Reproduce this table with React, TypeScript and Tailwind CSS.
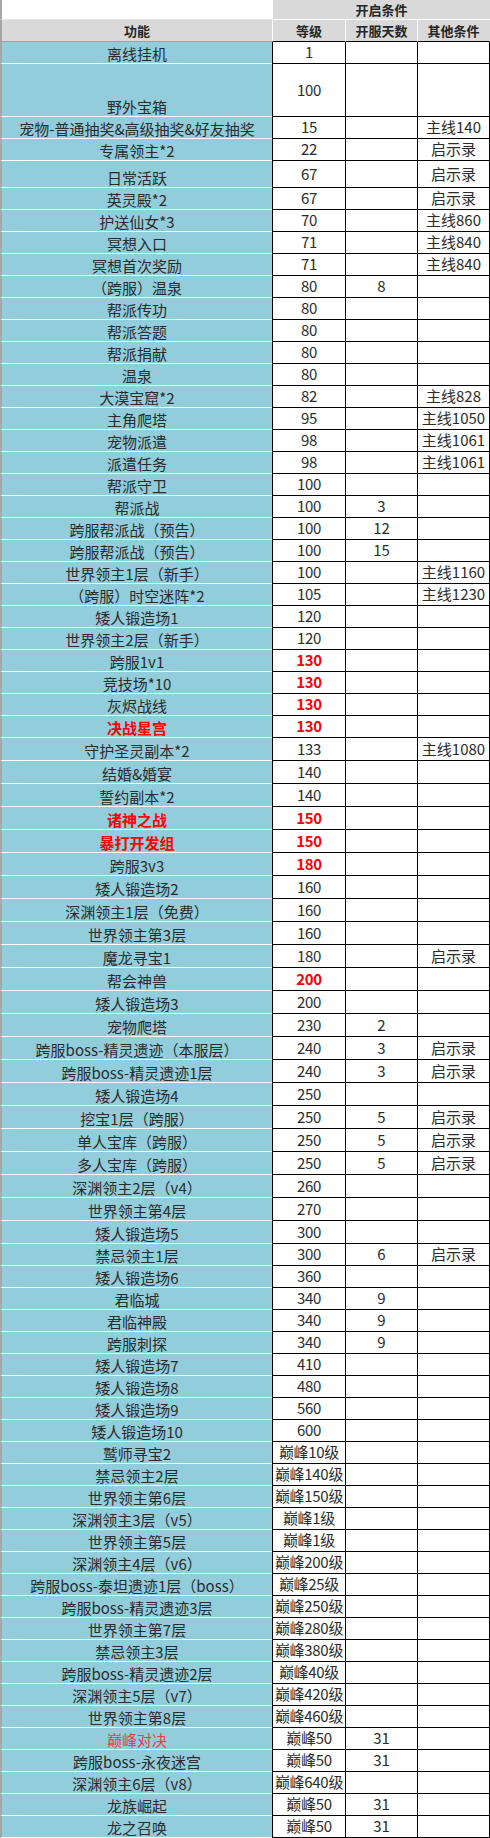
import React from 'react';

// Feature unlock table: name column on the left, unlock conditions on the right.
type Row = {
  n: string;
  l: string;
  d?: string;
  o?: string;
  h?: 22 | 23 | 27 | 53;
  nameRed?: boolean;
  nameSoftRed?: boolean;
  nameBold?: boolean;
  lvRed?: boolean;
};

const heightClass: Record<number, string> = {
  22: 'h-[22px]',
  23: 'h-[23px]',
  27: 'h-[27px]',
  53: 'h-[53px]',
};

const top: Row[] = [
  { n: '离线挂机', l: '1' },
  { n: '野外宝箱', l: '100', h: 53 },
  { n: '宠物-普通抽奖&高级抽奖&好友抽奖', l: '15', o: '主线140' },
  { n: '专属领主*2', l: '22', o: '启示录' },
  { n: '日常活跃', l: '67', o: '启示录', h: 27 },
  { n: '英灵殿*2', l: '67', o: '启示录' },
  { n: '护送仙女*3', l: '70', o: '主线860' },
  { n: '冥想入口', l: '71', o: '主线840' },
  { n: '冥想首次奖励', l: '71', o: '主线840' },
  { n: '（跨服）温泉', l: '80', d: '8' },
  { n: '帮派传功', l: '80' },
  { n: '帮派答题', l: '80' },
  { n: '帮派捐献', l: '80' },
  { n: '温泉', l: '80' },
  { n: '大漠宝窟*2', l: '82', o: '主线828' },
  { n: '主角爬塔', l: '95', o: '主线1050' },
  { n: '宠物派遣', l: '98', o: '主线1061' },
  { n: '派遣任务', l: '98', o: '主线1061' },
  { n: '帮派守卫', l: '100' },
  { n: '帮派战', l: '100', d: '3' },
  { n: '跨服帮派战（预告）', l: '100', d: '12' },
  { n: '跨服帮派战（预告）', l: '100', d: '15' },
  { n: '世界领主1层（新手）', l: '100', o: '主线1160' },
  { n: '（跨服）时空迷阵*2', l: '105', o: '主线1230' },
  { n: '矮人锻造场1', l: '120' },
  { n: '世界领主2层（新手）', l: '120' },
  { n: '跨服1v1', l: '130', lvRed: true },
  { n: '竞技场*10', l: '130', lvRed: true },
  { n: '灰烬战线', l: '130', lvRed: true },
  { n: '决战星宫', l: '130', lvRed: true, nameRed: true, nameBold: true },
];

const middle: Row[] = [
  { n: '守护圣灵副本*2', l: '133', o: '主线1080' },
  { n: '结婚&婚宴', l: '140' },
  { n: '誓约副本*2', l: '140' },
  { n: '诸神之战', l: '150', lvRed: true, nameRed: true, nameBold: true },
  { n: '暴打开发组', l: '150', lvRed: true, nameRed: true, nameBold: true },
  { n: '跨服3v3', l: '180', lvRed: true },
  { n: '矮人锻造场2', l: '160' },
  { n: '深渊领主1层（免费）', l: '160' },
  { n: '世界领主第3层', l: '160' },
  { n: '魔龙寻宝1', l: '180', o: '启示录' },
  { n: '帮会神兽', l: '200', lvRed: true },
  { n: '矮人锻造场3', l: '200' },
  { n: '宠物爬塔', l: '230', d: '2' },
  { n: '跨服boss-精灵遗迹（本服层）', l: '240', d: '3', o: '启示录' },
  { n: '跨服boss-精灵遗迹1层', l: '240', d: '3', o: '启示录' },
  { n: '矮人锻造场4', l: '250' },
  { n: '挖宝1层（跨服）', l: '250', d: '5', o: '启示录' },
  { n: '单人宝库（跨服）', l: '250', d: '5', o: '启示录' },
  { n: '多人宝库（跨服）', l: '250', d: '5', o: '启示录' },
  { n: '深渊领主2层（v4）', l: '260' },
  { n: '世界领主第4层', l: '270' },
  { n: '矮人锻造场5', l: '300' },
].map((r) => ({ ...r, h: 23 as const }));

const bottom: Row[] = [
  { n: '禁忌领主1层', l: '300', d: '6', o: '启示录' },
  { n: '矮人锻造场6', l: '360' },
  { n: '君临城', l: '340', d: '9' },
  { n: '君临神殿', l: '340', d: '9' },
  { n: '跨服刺探', l: '340', d: '9' },
  { n: '矮人锻造场7', l: '410' },
  { n: '矮人锻造场8', l: '480' },
  { n: '矮人锻造场9', l: '560' },
  { n: '矮人锻造场10', l: '600' },
  { n: '鹫师寻宝2', l: '巅峰10级' },
  { n: '禁忌领主2层', l: '巅峰140级' },
  { n: '世界领主第6层', l: '巅峰150级' },
  { n: '深渊领主3层（v5）', l: '巅峰1级' },
  { n: '世界领主第5层', l: '巅峰1级' },
  { n: '深渊领主4层（v6）', l: '巅峰200级' },
  { n: '跨服boss-泰坦遗迹1层（boss）', l: '巅峰25级' },
  { n: '跨服boss-精灵遗迹3层', l: '巅峰250级' },
  { n: '世界领主第7层', l: '巅峰280级' },
  { n: '禁忌领主3层', l: '巅峰380级' },
  { n: '跨服boss-精灵遗迹2层', l: '巅峰40级' },
  { n: '深渊领主5层（v7）', l: '巅峰420级' },
  { n: '世界领主第8层', l: '巅峰460级' },
  { n: '巅峰对决', l: '巅峰50', d: '31', nameSoftRed: true },
  { n: '跨服boss-永夜迷宫', l: '巅峰50', d: '31' },
  { n: '深渊领主6层（v8）', l: '巅峰640级' },
  { n: '龙族崛起', l: '巅峰50', d: '31' },
  { n: '龙之召唤', l: '巅峰50', d: '31' },
];

const rows = [...top, ...middle, ...bottom];

function TableRow({ r }: { r: Row }) {
  const h = heightClass[r.h ?? 22];
  const cell = 'flex items-center justify-center border-b border-l border-black whitespace-nowrap';
  const nameColor = r.nameRed ? 'text-[#ff0000]' : r.nameSoftRed ? 'text-[#f5383d]' : 'text-[#2b2b2b]';
  return (
    <div className={`flex ${h}`}>
      <div
        className={`flex w-[272px] items-end justify-center border-b border-l-2 border-b-white border-l-[#a6a6a6] bg-[#92cddc] leading-[19px] whitespace-nowrap ${nameColor} ${
          r.nameBold ? 'font-bold' : 'font-normal'
        }`}
      >
        {r.n}
      </div>
      <div
        className={`${cell} w-[73px] tracking-[-0.3px] ${r.lvRed ? 'font-bold text-[#ff0000]' : 'text-[#2b2b2b]'}`}
      >
        {r.l}
      </div>
      <div className={`${cell} w-[72px] text-[#2b2b2b]`}>{r.d}</div>
      <div className={`${cell} w-[73px] border-r text-[#2b2b2b]`}>{r.o}</div>
    </div>
  );
}

export default function App() {
  return (
    <div className="w-[490px] bg-white font-['Noto_Sans_CJK_SC','Microsoft_YaHei',sans-serif] text-[15px]">
      {/* header: group title */}
      <div className="flex h-[20px] text-[13px] font-bold text-[#262626]">
        <div className="w-[272px] border-b border-l-2 border-b-[#e6e6e6] border-l-[#a6a6a6] bg-white" />
        <div className="flex w-[218px] items-center justify-center border-b border-l border-white bg-[#d9d9d9]">
          开启条件
        </div>
      </div>
      {/* header: column titles */}
      <div className="flex h-[22px] text-[13px] font-bold text-[#262626]">
        <div className="flex w-[272px] items-center justify-center border-b border-l-2 border-b-[#a0a0a0] border-l-[#a6a6a6] bg-[#d9d9d9]">
          功能
        </div>
        <div className="flex w-[73px] items-center justify-center border-b border-l border-b-black border-l-white bg-[#d9d9d9]">
          等级
        </div>
        <div className="flex w-[72px] items-center justify-center border-b border-l border-b-black border-l-white bg-[#d9d9d9]">
          开服天数
        </div>
        <div className="flex w-[73px] items-center justify-center border-b border-l border-r border-b-black border-l-white border-r-[#d9d9d9] bg-[#d9d9d9]">
          其他条件
        </div>
      </div>
      {rows.map((r, i) => (
        <TableRow key={i} r={r} />
      ))}
    </div>
  );
}
